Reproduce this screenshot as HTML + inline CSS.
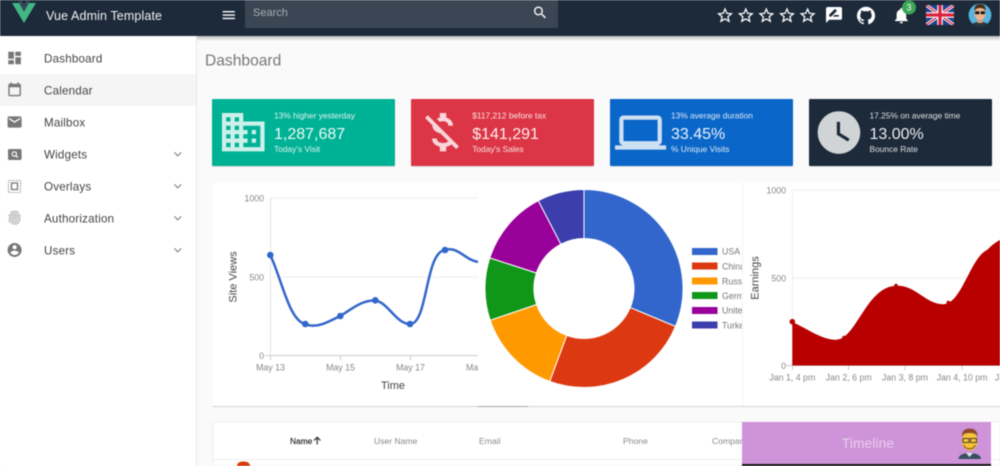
<!DOCTYPE html>
<html lang="en">
<head>
<meta charset="utf-8">
<title>Vue Admin Template</title>
<style>
html,body{margin:0;padding:0;width:1000px;height:466px;overflow:hidden;background:#fafafa}
svg{display:block;filter:blur(.45px)}
text{font-family:"Liberation Sans",sans-serif}
.nav{font-size:11.6px;fill:#444;letter-spacing:.2px}
.ic{fill:#777}
.cs{font-size:8.4px;fill:#fff;fill-opacity:.85}
.cb{font-size:16px;fill:#fff;fill-opacity:.92}
.ax{font-size:8.8px;fill:#888}
.ti{font-size:11px;fill:#444}
.lg{font-size:8.8px;fill:#777}
.th{font-size:8.6px;fill:#888}
.w{fill:#fff;fill-opacity:.8}
</style>
</head>
<body>
<svg width="1000" height="466" viewBox="0 0 1000 466" xmlns="http://www.w3.org/2000/svg">
<defs>
<linearGradient id="hs" x1="0" y1="0" x2="0" y2="1"><stop offset="0" stop-color="#bbb"/><stop offset="1" stop-color="#fafafa"/></linearGradient>
<path id="star" d="M22 9.24l-7.19-.62L12 2 9.19 8.63 2 9.24l5.46 4.73L5.82 21 12 17.27 18.18 21l-1.63-7.03L22 9.24zM12 15.4l-3.76 2.27 1-4.28-3.32-2.88 4.38-.38L12 6.1l1.71 4.04 4.38.38-3.32 2.88 1 4.28L12 15.4z"/>
<clipPath id="flag"><rect x="926" y="5" width="28" height="20"/></clipPath>
<clipPath id="av1"><circle cx="980" cy="15" r="11.5"/></clipPath>
</defs>

<rect width="1000" height="466" fill="#fafafa"/>
<rect x="197" y="36" width="803" height="5" fill="url(#hs)"/>

<!-- sidebar -->
<rect x="0" y="36" width="196" height="430" fill="#fff"/>
<rect x="196" y="36" width="1" height="430" fill="#e6e6e6"/>
<rect x="0" y="74" width="196" height="32" fill="#f5f5f5"/>

<g class="ic">
<path transform="translate(6.2 49.6) scale(.7)" d="M3 13h8V3H3v10zm0 8h8v-6H3v6zm10 0h8V11h-8v10zm0-18v6h8V3h-8z"/>
<path transform="translate(6.2 81.6) scale(.7)" d="M19 3h-1V1h-2v2H8V1H6v2H5c-1.1 0-2 .9-2 2v14c0 1.1.9 2 2 2h14c1.1 0 2-.9 2-2V5c0-1.1-.9-2-2-2zm0 16H5V8h14v11z"/>
<path transform="translate(6.2 113.6) scale(.7)" d="M20 4H4c-1.1 0-1.99.9-1.99 2L2 18c0 1.1.9 2 2 2h16c1.1 0 2-.9 2-2V6c0-1.1-.9-2-2-2zm0 4l-8 5-8-5V6l8 5 8-5v2z"/>
<rect x="8" y="149" width="13.6" height="11" rx="1.5"/>
<rect x="11.5" y="183" width="6" height="6.500" fill="none" stroke="#777" stroke-width="1.3"/>
<rect x="8.5" y="180.500" width="12" height="12" fill="none" stroke="#888" stroke-width="1.1" stroke-dasharray="1.2 1.2"/>
<path transform="translate(6.2 209.6) scale(.7)" fill="#8a8a8a" d="M17.81 4.47c-.08 0-.16-.02-.23-.06C15.66 3.42 14 3 12.01 3c-1.98 0-3.86.47-5.57 1.41-.24.13-.54.04-.68-.2-.13-.24-.04-.55.2-.68C7.82 2.52 9.86 2 12.01 2c2.13 0 3.99.47 6.03 1.52.25.13.34.43.21.67-.09.18-.26.28-.44.28zM3.5 9.72c-.1 0-.2-.03-.29-.09-.23-.16-.28-.47-.12-.7.99-1.4 2.25-2.5 3.75-3.27C9.98 4.04 14 4.03 17.15 5.65c1.5.77 2.76 1.86 3.75 3.25.16.22.11.54-.12.7-.23.16-.54.11-.7-.12-.9-1.26-2.04-2.25-3.39-2.94-2.87-1.47-6.54-1.47-9.4.01-1.36.7-2.5 1.7-3.4 2.96-.08.14-.23.21-.39.21zm6.25 12.07c-.13 0-.26-.05-.35-.15-.87-.87-1.34-1.43-2.01-2.64-.69-1.23-1.05-2.73-1.05-4.34 0-2.97 2.54-5.39 5.66-5.39s5.66 2.42 5.66 5.39c0 .28-.22.5-.5.5s-.5-.22-.5-.5c0-2.42-2.09-4.39-4.66-4.39-2.57 0-4.66 1.97-4.66 4.39 0 1.44.32 2.77.93 3.85.64 1.15 1.08 1.64 1.85 2.42.19.2.19.51 0 .71-.11.1-.24.15-.37.15zm7.17-1.85c-1.19 0-2.24-.3-3.1-.89-1.49-1.01-2.38-2.65-2.38-4.39 0-.28.22-.5.5-.5s.5.22.5.5c0 1.41.72 2.74 1.94 3.56.71.48 1.54.71 2.54.71.24 0 .64-.03 1.04-.1.27-.05.53.13.58.41.05.27-.13.53-.41.58-.57.11-1.07.12-1.21.12zM14.91 22c-.04 0-.09-.01-.13-.02-1.59-.44-2.63-1.03-3.72-2.1-1.4-1.39-2.17-3.24-2.17-5.22 0-1.62 1.38-2.94 3.08-2.94 1.7 0 3.08 1.32 3.08 2.94 0 1.07.93 1.94 2.08 1.94s2.08-.87 2.08-1.94c0-3.77-3.25-6.83-7.25-6.83-2.84 0-5.44 1.58-6.61 4.03-.39.81-.59 1.76-.59 2.8 0 .78.07 2.01.67 3.61.1.26-.03.55-.29.64-.26.1-.55-.04-.64-.29-.49-1.31-.73-2.61-.73-3.96 0-1.2.23-2.29.68-3.24 1.33-2.79 4.28-4.6 7.51-4.6 4.55 0 8.25 3.51 8.25 7.83 0 1.62-1.38 2.94-3.08 2.94s-3.08-1.32-3.08-2.94c0-1.07-.93-1.94-2.08-1.94s-2.08.87-2.08 1.94c0 1.71.66 3.31 1.87 4.51.95.94 1.86 1.46 3.27 1.85.27.07.42.35.35.61-.05.23-.26.38-.47.38z"/>
<path transform="translate(6.2 241.6) scale(.7)" d="M12 2C6.48 2 2 6.48 2 12s4.48 10 10 10 10-4.48 10-10S17.52 2 12 2zm0 3c1.66 0 3 1.34 3 3s-1.34 3-3 3-3-1.34-3-3 1.34-3 3-3zm0 14.2c-2.5 0-4.71-1.28-6-3.22.03-1.99 4-3.08 6-3.08 1.99 0 5.97 1.09 6 3.08-1.29 1.94-3.5 3.22-6 3.22z"/>
</g>
<circle cx="14.3" cy="154" r="2.2" fill="none" stroke="#fff" stroke-width="1.1"/>
<path d="M16 155.7l1.9 1.9" stroke="#fff" stroke-width="1.2"/>

<text class="nav" x="44" y="62.400">Dashboard</text>
<text class="nav" x="44" y="94.400">Calendar</text>
<text class="nav" x="44" y="126.400">Mailbox</text>
<text class="nav" x="44" y="158.400">Widgets</text>
<text class="nav" x="44" y="190.400">Overlays</text>
<text class="nav" x="44" y="222.400">Authorization</text>
<text class="nav" x="44" y="254.400">Users</text>
<g fill="none" stroke="#888" stroke-width="1.1">
<path d="M174.300 152.300l3.500 3.500 3.500-3.500"/><path d="M174.300 184.300l3.500 3.500 3.500-3.500"/><path d="M174.300 216.300l3.500 3.500 3.500-3.500"/><path d="M174.300 248.300l3.500 3.500 3.500-3.500"/>
</g>

<!-- page title -->
<text x="205" y="65.500" font-size="15.600" fill="#777">Dashboard</text>

<!-- stat cards -->
<rect x="212" y="100" width="183" height="67" rx="1" fill="#ddd"/>
<rect x="411" y="100" width="183" height="67" rx="1" fill="#ddd"/>
<rect x="610" y="100" width="183" height="67" rx="1" fill="#ddd"/>
<rect x="809" y="100" width="183" height="67" rx="1" fill="#ddd"/>
<rect x="212" y="99" width="183" height="67" rx="1" fill="#00b295"/>
<rect x="411" y="99" width="183" height="67" rx="1" fill="#dc3545"/>
<rect x="610" y="99" width="183" height="67" rx="1" fill="#0a66c8"/>
<rect x="809" y="99" width="183" height="67" rx="1" fill="#1c2a3a"/>

<path class="w" transform="translate(217.700 106.600) scale(2.130)" d="M12 7V3H2v18h20V7H12zM6 19H4v-2h2v2zm0-4H4v-2h2v2zm0-4H4V9h2v2zm0-4H4V5h2v2zm4 12H8v-2h2v2zm0-4H8v-2h2v2zm0-4H8V9h2v2zm0-4H8V5h2v2zm10 12h-8v-2h2v-2h-2v-2h2v-2h-2V9h8v10zm-2-8h-2v2h2v-2zm0 4h-2v2h2v-2z"/>
<path class="w" transform="translate(416.400 106.600) scale(2.130)" d="M12.500 6.900c1.780 0 2.440.85 2.500 2.100h2.210c-.07-1.720-1.120-3.300-3.210-3.810V3h-3v2.160c-.53.12-1.030.3-1.480.54l1.470 1.470c.41-.17.91-.27 1.510-.27zM5.330 4.060L4.060 5.330 7.500 8.770c0 2.080 1.560 3.210 3.910 3.910l3.510 3.510c-.34.48-1.050.91-2.420.91-2.060 0-2.870-.92-2.980-2.100h-2.200c.12 2.190 1.760 3.420 3.680 3.830V21h3v-2.150c.96-.18 1.830-.55 2.460-1.120l2.220 2.220 1.270-1.270L5.330 4.060z"/>
<path class="w" transform="translate(615 107) scale(2.130)" d="M20 18c1.100 0 1.990-.9 1.990-2L22 6c0-1.100-.9-2-2-2H4c-1.100 0-2 .9-2 2v10c0 1.100.9 2 2 2H0v2h24v-2h-4zM4 6h16v10H4V6z"/>
<path class="w" transform="translate(813.400 107) scale(2.130)" d="M12 2C6.500 2 2 6.500 2 12s4.500 10 10 10 10-4.500 10-10S17.500 2 12 2zm4.200 14.200L11 13V7h1.500v5.200l4.500 2.700-.8 1.300z"/>

<text class="cs" x="274" y="118.500">13% higher yesterday</text>
<text class="cb" x="274" y="139">1,287,687</text>
<text class="cs" x="274" y="152">Today's Visit</text>
<text class="cs" x="472.200" y="118.500">$117,212 before tax</text>
<text class="cb" x="472.200" y="139">$141,291</text>
<text class="cs" x="472.200" y="152">Today's Sales</text>
<text class="cs" x="671" y="118.500">13% average duration</text>
<text class="cb" x="671" y="139">33.45%</text>
<text class="cs" x="671" y="152">% Unique Visits</text>
<text class="cs" x="869.500" y="118.500">17.25% on average time</text>
<text class="cb" x="869.500" y="139">13.00%</text>
<text class="cs" x="869.500" y="152">Bounce Rate</text>

<!-- line chart card -->
<rect x="213" y="184" width="787" height="223" fill="#d2d2d2"/>
<rect x="213" y="183" width="787" height="223" rx="1" fill="#fff"/>
<g stroke="#eee" stroke-width="1"><path d="M270 198H480"/><path d="M270 277H480"/></g>
<path d="M270.500 198V356" stroke="#e4e4e4"/>
<path d="M265 355.500H480M340.500 356v4M410.500 356v4M270.500 356v4" stroke="#ccc"/>
<path d="M270.300 255C282 280 289 320 305 324C316 329 328 322 340 316C352 309 362 300 375 300.500C388 302 396 324 410 324C428 324 425 252 445 250C458 246 465 260 478 262" fill="none" stroke="#3366cc" stroke-width="2.500"/>
<g fill="#3366cc"><circle cx="270.300" cy="255" r="3.300"/><circle cx="305.300" cy="324" r="3.300"/><circle cx="340.300" cy="316" r="3.300"/><circle cx="375.300" cy="300.300" r="3.300"/><circle cx="410" cy="324" r="3.300"/><circle cx="445" cy="250" r="3.300"/></g>
<g class="ax">
<text x="264" y="201.500" text-anchor="end">1000</text>
<text x="264" y="280.500" text-anchor="end">500</text>
<text x="264" y="359" text-anchor="end">0</text>
<text x="270.500" y="370.500" text-anchor="middle">May 13</text>
<text x="340.500" y="370.500" text-anchor="middle">May 15</text>
<text x="410.500" y="370.500" text-anchor="middle">May 17</text>
<text x="466" y="370.500">May 19</text>
</g>
<text class="ti" x="393" y="389" text-anchor="middle">Time</text>
<text class="ti" font-size="10.500" transform="translate(236.500 277) rotate(-90)" text-anchor="middle">Site Views</text>

<!-- pie card -->
<rect x="478" y="405" width="50" height="2" fill="#aaa"/>
<rect x="478" y="183" width="264" height="223" fill="#fff"/>
<g stroke="#fff" stroke-width="1">
<path fill="#3366cc" d="M584 189.500A99 99 0 0 1 675.500 326.400L630.200 307.600A50 50 0 0 0 584 238.500Z"/>
<path fill="#dc3912" d="M675.500 326.400A99 99 0 0 1 549.700 381.400L566.700 335.400A50 50 0 0 0 630.200 307.600Z"/>
<path fill="#ff9900" d="M549.700 381.400A99 99 0 0 1 490.200 320.200L536.600 304.500A50 50 0 0 0 566.700 335.400Z"/>
<path fill="#109618" d="M490.200 320.200A99 99 0 0 1 489.800 257.900L536.400 273A50 50 0 0 0 536.600 304.500Z"/>
<path fill="#990099" d="M489.800 257.900A99 99 0 0 1 538.300 200.700L560.900 244.200A50 50 0 0 0 536.400 273Z"/>
<path fill="#3b3eac" d="M538.300 200.700A99 99 0 0 1 584 189.500L584 238.500A50 50 0 0 0 560.900 244.200Z"/>
</g>
<rect x="692" y="248" width="25.500" height="7" fill="#3366cc"/>
<rect x="692" y="262.500" width="25.500" height="7" fill="#dc3912"/>
<rect x="692" y="277.500" width="25.500" height="7" fill="#ff9900"/>
<rect x="692" y="292" width="25.500" height="7" fill="#109618"/>
<rect x="692" y="307" width="25.500" height="7" fill="#990099"/>
<rect x="692" y="321.500" width="25.500" height="7" fill="#3b3eac"/>
<g class="lg">
<text x="722" y="254.500">USA</text>
<text x="722" y="269.500">China</text>
<text x="722" y="284.500">Russia</text>
<text x="722" y="299">Germany</text>
<text x="722" y="313.500">United States</text>
<text x="722" y="328.500">Turkey</text>
</g>

<!-- area chart card -->
<rect x="742" y="183" width="258" height="223" fill="#fff"/>
<rect x="742" y="183" width="1" height="223" fill="#f4f4f4"/>
<g stroke="#eee"><path d="M792 190H1000"/><path d="M792 278H1000"/></g>
<path d="M792.500 190V366" stroke="#eee"/>
<path d="M786 365.500H1000M792.500 366v4M848.500 366v4M905 366v4M962 366v4" stroke="#ccc"/>
<path d="M792.300 322C808 329 822 340 836 339.700C856 340 866 287 896 285.700C916 285 925 304 943 304.300C962 304 970 258 987 250C992 245 996 242 1000 240L1000 365.500L792.300 365.500Z" fill="#b80000"/>
<g fill="#b80000"><circle cx="792.300" cy="321.700" r="2.800"/><circle cx="844" cy="337.500" r="1.800"/><circle cx="896" cy="285.500" r="1.800"/><circle cx="948.300" cy="302.500" r="1.800"/></g>
<g class="ax">
<text x="786" y="193.500" text-anchor="end">1000</text>
<text x="786" y="281.500" text-anchor="end">500</text>
<text x="786" y="369" text-anchor="end">0</text>
<text x="792.300" y="380.500" text-anchor="middle">Jan 1, 4 pm</text>
<text x="848.700" y="380.500" text-anchor="middle">Jan 2, 6 pm</text>
<text x="905" y="380.500" text-anchor="middle">Jan 3, 8 pm</text>
<text x="962" y="380.500" text-anchor="middle">Jan 4, 10 pm</text>
<text x="995" y="380.500">Jan 5</text>
</g>
<text class="ti" font-size="10.500" transform="translate(758.500 278) rotate(-90)" text-anchor="middle">Earnings</text>

<!-- table -->
<rect x="213" y="422" width="787" height="44" fill="#fff" stroke="#eee"/>
<rect x="213" y="459" width="787" height="1" fill="#eee"/>
<text x="290" y="444" font-size="8.400" fill="#222" stroke="#222" stroke-width=".15">Name</text>
<path d="M317.200 444.500v-7M314 440.500l3.200-3.200 3.200 3.200" fill="none" stroke="#222" stroke-width="1.100"/>
<text class="th" x="374" y="444">User Name</text>
<text class="th" x="479" y="444">Email</text>
<text class="th" x="623" y="444">Phone</text>
<text class="th" x="712" y="444">Company</text>
<path d="M237 466c0-3 2.500-4.500 6.500-4.500s6.500 1.500 6.500 4.500z" fill="#d83a0b"/>

<!-- timeline -->
<rect x="742" y="422" width="249" height="42" fill="#ce93d8"/>
<rect x="742" y="464" width="249" height="2" fill="#111"/>
<text x="868" y="448" font-size="13.800" fill="#fff" fill-opacity=".55" text-anchor="middle" letter-spacing=".1">Timeline</text>
<path d="M958.500 459c0-4 5-6 11-6s11.500 2 11.500 6z" fill="#37505f"/>
<path d="M966 453l3.500 4 3.500-4z" fill="#dfe6e8"/>
<ellipse cx="969.700" cy="441" rx="7.800" ry="9.500" fill="#f6c33b"/>
<path d="M962 437c-.5-6 3-8.500 7.700-8.500s8.200 2.500 7.700 8.500c-1-3-3-4-7.700-4s-6.700 1-7.700 4z" fill="#8a4a2a"/>
<rect x="963" y="438.500" width="6" height="4" fill="none" stroke="#222" stroke-width=".8"/>
<rect x="970.500" y="438.500" width="6" height="4" fill="none" stroke="#222" stroke-width=".8"/>
<path d="M964 445c1 5 10 5 11 0" fill="none" stroke="#8a5a20" stroke-width="1.200"/>

<!-- header -->
<rect x="0" y="0" width="1000" height="36" fill="#1c2a3a"/>
<path d="M12 3H21L24 9 27 3H36L24 23Z" fill="#41b883"/>
<path d="M18 1H22L24 5 26 1H30L24 12Z" fill="#35495e"/>
<text x="46" y="20" font-size="12.500" fill="#f0f2f4" letter-spacing=".12">Vue Admin Template</text>
<path transform="translate(220.600 6.900) scale(.68)" fill="#fff" d="M3 18h18v-2H3v2zm0-5h18v-2H3v2zm0-7v2h18V6H3z"/>
<rect x="245" y="0" width="313" height="28" fill="#3a4653"/>
<text x="253" y="16.200" font-size="11" fill="#aab0b6">Search</text>
<path transform="translate(532 4.500) scale(.68)" fill="#fff" d="M15.500 14h-.79l-.28-.27C15.410 12.590 16 11.110 16 9.500 16 5.910 13.090 3 9.500 3S3 5.910 3 9.500 5.910 16 9.500 16c1.610 0 3.090-.59 4.230-1.570l.27.28v.79l5 4.990L20.490 19l-4.990-5zm-6 0C7.010 14 5 11.990 5 9.500S7.010 5 9.500 5 14 7.010 14 9.500 11.990 14 9.500 14z"/>

<g fill="#fff">
<use href="#star" transform="translate(715.400 5.800) scale(.8)"/>
<use href="#star" transform="translate(736.200 5.800) scale(.8)"/>
<use href="#star" transform="translate(756.700 5.800) scale(.8)"/>
<use href="#star" transform="translate(777.400 5.800) scale(.8)"/>
<use href="#star" transform="translate(798 5.800) scale(.8)"/>
<path transform="translate(824.400 5.400) scale(.8)" d="M20 2H4c-1.100 0-1.990.9-1.990 2L2 22l4-4h14c1.100 0 2-.9 2-2V4c0-1.100-.9-2-2-2zM6 14v-2.470l6.880-6.880c.2-.2.510-.2.710 0l1.770 1.770c.2.2.2.510 0 .71L8.470 14H6zm12 0h-7.500l2-2H18v2z"/>
<path transform="translate(857 6.500) scale(.75)" d="M12 .3a12 12 0 0 0-3.800 23.400c.6.1.8-.3.8-.6v-2c-3.300.7-4-1.600-4-1.600-.6-1.400-1.400-1.800-1.400-1.800-1-.7.1-.7.1-.7 1.200 0 1.900 1.200 1.900 1.200 1 1.800 2.800 1.300 3.500 1 0-.8.4-1.300.7-1.600-2.700-.3-5.500-1.300-5.500-6 0-1.200.5-2.300 1.300-3.100-.2-.4-.6-1.600 0-3.200 0 0 1-.3 3.400 1.200a11.500 11.500 0 0 1 6 0c2.300-1.500 3.300-1.200 3.300-1.200.6 1.600.2 2.800 0 3.200.9.8 1.300 1.900 1.300 3.200 0 4.600-2.800 5.600-5.500 5.900.5.4.9 1 .9 2.200v3.300c0 .3.1.7.8.6A12 12 0 0 0 12 .3"/>
<path transform="translate(891.800 5.900) scale(.8)" d="M12 22c1.100 0 2-.9 2-2h-4c0 1.100.89 2 2 2zm6-6v-5c0-3.070-1.640-5.640-4.500-6.320V4c0-.83-.67-1.500-1.500-1.500s-1.500.67-1.500 1.500v.68C7.630 5.360 6 7.920 6 11v5l-2 2v1h16v-1l-2-2z"/>
</g>
<circle cx="909" cy="7.500" r="7" fill="#3aa655"/>
<text x="909" y="10.700" font-size="9" fill="#fff" text-anchor="middle">3</text>

<g clip-path="url(#flag)">
<rect x="926" y="5" width="28" height="20" fill="#22408f"/>
<path d="M926 5L954 25M954 5L926 25" stroke="#fff" stroke-width="3.200"/>
<path d="M926 5L954 25M954 5L926 25" stroke="#d8213a" stroke-width="1.300"/>
<path d="M940 5V25M926 15H954" stroke="#fff" stroke-width="5.500"/>
<path d="M940 5V25M926 15H954" stroke="#d8213a" stroke-width="3.200"/>
</g>

<g clip-path="url(#av1)">
<circle cx="980" cy="15" r="11.500" fill="#58b4dc"/>
<path d="M970 28c0-4 4-6 10-6s10 2 10 6z" fill="#2f3438"/>
<rect x="977.500" y="18" width="5" height="5" fill="#d99c78"/>
<ellipse cx="980" cy="13.500" rx="5.500" ry="6.500" fill="#eeb48e"/>
<path d="M974.500 11c-.5-5 2-7 5.500-7s6 2 5.500 7c-1-2-3-3-5.500-3s-4.500 1-5.500 3z" fill="#4a2c1f"/>
<rect x="975" y="11.300" width="4.500" height="3" rx="1" fill="#1a1a1a"/>
<rect x="980.500" y="11.300" width="4.500" height="3" rx="1" fill="#1a1a1a"/>
</g>
</svg>
</body>
</html>
